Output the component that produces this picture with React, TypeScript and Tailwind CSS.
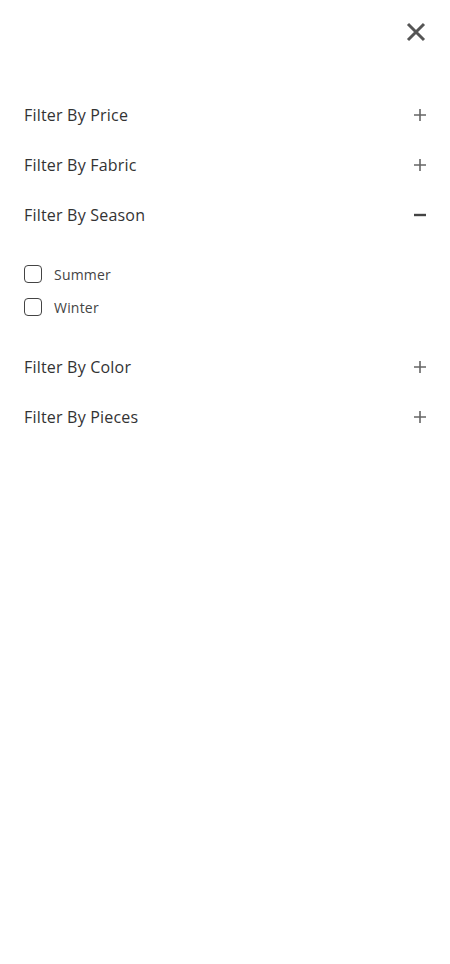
import { useState } from "react";

const sections = ["Price", "Fabric", "Season", "Color", "Pieces"];
const seasons = ["Summer", "Winter"];

function PlusIcon() {
  return (
    <svg width="12" height="12" viewBox="0 0 12 12" className="text-[#666]">
      <path d="M6 0v12M0 6h12" stroke="currentColor" strokeWidth="1.6" />
    </svg>
  );
}

function MinusIcon() {
  return (
    <svg width="12" height="12" viewBox="0 0 12 12" className="text-[#444]">
      <path d="M0 6h12" stroke="currentColor" strokeWidth="2.4" />
    </svg>
  );
}

export default function App() {
  const [open, setOpen] = useState<string>("Season");
  const [checked, setChecked] = useState<string[]>([]);

  return (
    <div
      className="min-h-screen bg-white text-[#333]"
      style={{ fontFamily: '"Open Sans", "Noto Sans", sans-serif' }}
    >
      <div className="flex justify-end pt-[21px] pr-[23px]">
        <button className="text-[#555]">
          <svg width="22" height="22" viewBox="0 0 22 22">
            <path d="M3 3l16 16M19 3L3 19" stroke="currentColor" strokeWidth="3" />
          </svg>
        </button>
      </div>

      <div className="mt-[47px] px-6">
        {sections.map((s) => (
          <div key={s}>
            <button
              onClick={() => setOpen(open === s ? "" : s)}
              className="flex h-[50px] w-full items-center justify-between text-left"
            >
              <span className="text-[16px] tracking-[0.2px]">Filter By {s}</span>
              {open === s ? <MinusIcon /> : <PlusIcon />}
            </button>
            {open === s && s === "Season" && (
              <div className="flex flex-col gap-[15px] pt-[25px] pb-[26px]">
                {seasons.map((o) => (
                  <label key={o} className="flex h-[18px] items-center gap-3 cursor-pointer">
                    <input
                      type="checkbox"
                      checked={checked.includes(o)}
                      onChange={() =>
                        setChecked(checked.includes(o) ? checked.filter((c) => c !== o) : [...checked, o])
                      }
                      className="h-[18px] w-[18px] appearance-none rounded-[4px] border-[1.5px] border-[#444] bg-white"
                    />
                    <span className="text-[14px] tracking-[0.2px] text-[#444]">{o}</span>
                  </label>
                ))}
              </div>
            )}
          </div>
        ))}
      </div>
    </div>
  );
}
